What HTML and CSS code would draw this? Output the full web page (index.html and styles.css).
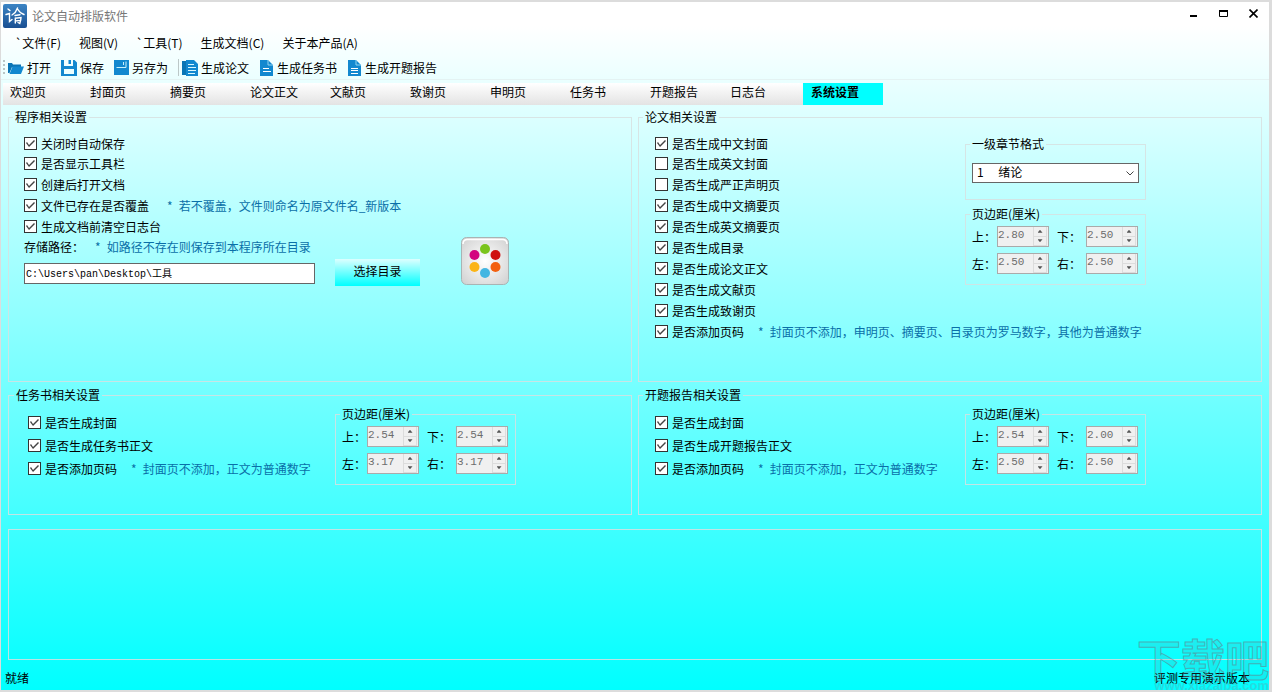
FILE: index.html
```html
<!DOCTYPE html>
<html lang="zh-CN">
<head>
<meta charset="utf-8">
<meta name="viewport" content="width=device-width, initial-scale=1">
<title>论文自动排版软件</title>
<link rel="stylesheet" href="styles.css">
</head>
<body>
<div class="window">
  <header class="titlebar">
    <svg class="app-icon" viewBox="0 0 24 24" aria-hidden="true">
      <defs><linearGradient id="appbg" x1="0" y1="0" x2="0" y2="1"><stop offset="0" stop-color="#3b84c4"/><stop offset="1" stop-color="#1a4f92"/></linearGradient></defs>
      <rect width="24" height="24" rx="2" fill="url(#appbg)"/>
      <path d="M5 5l2 1.600M3 10.500l3.500-1v8l2.500-2M14.500 4c-1 3-3 5.500-5.500 7M14.500 5c1.500 2.500 3.500 4.500 6.500 5.500M12 11.500l5-.8M12.300 14v5M12.300 14.300l5.700-.8c0 2-.5 4-1.200 6l-1.800-1M12.300 17l5-.6" stroke="#fff" stroke-width="1.400" fill="none" stroke-linecap="round"/>
    </svg>
    <h1 class="title">论文自动排版软件</h1>
    <div class="controls">
      <button class="control" aria-label="最小化"><svg width="9" height="9" viewBox="0 0 9 9"><path d="M1 7h7" stroke="#000" stroke-width="2"/></svg></button>
      <button class="control" aria-label="最大化"><svg width="9" height="9" viewBox="0 0 9 9"><path d="M0.500 1.500v6h8v-6" stroke="#000" fill="none"/><path d="M0 2h9" stroke="#000" stroke-width="2"/></svg></button>
      <button class="control" aria-label="关闭"><svg width="9" height="9" viewBox="0 0 9 9"><path d="M0.500 0.500L8.500 8.500M8.500 0.500L0.500 8.500" stroke="#000" stroke-width="1.600" fill="none"/></svg></button>
    </div>
  </header>

  <nav class="menu">
    <button>`文件(F)</button>
    <button>视图(V)</button>
    <button>`工具(T)</button>
    <button>生成文档(C)</button>
    <button>关于本产品(A)</button>
  </nav>

  <div class="toolbar">
    <span class="grip"></span>
    <button><svg width="16" height="16" viewBox="0 0 16 16"><path d="M0 3h4l1 1.500h8V7H4L1.500 13H0z" fill="#0a75b5"/><path d="M4.500 6.500H16L13 14H1.500z" fill="#1288cf"/></svg>打开</button>
    <button><svg width="16" height="16" viewBox="0 0 16 16"><path d="M0 0h3v6h9V0h1.500L16 2.500V16H0z" fill="#1288cf"/><path d="M7.500 0h2.500v4H7.500z" fill="#1288cf"/><path d="M3 9h10v5H3z" fill="#edffff"/></svg>保存</button>
    <button><svg width="15" height="15" viewBox="0 0 15 15"><path d="M0 0h15v15H0z" fill="#1288cf"/><path d="M2.500 7.500h9.500V1.500M9.500 2v3" stroke="#c8f0fa" fill="none"/></svg>另存为</button>
    <span class="separator"></span>
    <button><svg width="16" height="16" viewBox="0 0 16 16"><path d="M0 1h5v14H0z" fill="#0a75b5"/><path d="M4 0h8l4 4v12H4z" fill="#1288cf"/><path d="M6 4.500h6M6 7.500h8M6 10.500h8M6 13.500h7" stroke="#d9f8ff"/></svg>生成论文</button>
    <button class="doc"><svg width="13" height="16" viewBox="0 0 13 16"><path d="M0 0h8l5 5v11H0z" fill="#1288cf"/><path d="M8 0v5h5" stroke="#8fd4f0" fill="none"/><path d="M3 8.500h6M3 11.500h8" stroke="#fff"/></svg>生成任务书</button>
    <button class="doc"><svg width="13" height="16" viewBox="0 0 13 16"><path d="M0 0h8l5 5v11H0z" fill="#1288cf"/><path d="M8 0v5h5" stroke="#8fd4f0" fill="none"/><path d="M3 8.500h7M3 10.500h7M3 13.500h7" stroke="#fff"/></svg>生成开题报告</button>
  </div>

  <nav class="tabs" role="tablist">
    <button role="tab">欢迎页</button>
    <button role="tab">封面页</button>
    <button role="tab">摘要页</button>
    <button role="tab">论文正文</button>
    <button role="tab">文献页</button>
    <button role="tab">致谢页</button>
    <button role="tab">申明页</button>
    <button role="tab">任务书</button>
    <button role="tab">开题报告</button>
    <button role="tab">日志台</button>
    <button role="tab" class="active" aria-selected="true">系统设置</button>
  </nav>

  <main class="settings">
    <fieldset class="group program">
      <legend>程序相关设置</legend>
      <ul class="checks">
        <li><label><input type="checkbox" checked>关闭时自动保存</label></li>
        <li><label><input type="checkbox" checked>是否显示工具栏</label></li>
        <li><label><input type="checkbox" checked>创建后打开文档</label></li>
        <li><label><input type="checkbox" checked>文件已存在是否覆盖</label><span class="hint far"><span>*</span>若不覆盖，文件则命名为原文件名_新版本</span></li>
        <li><label><input type="checkbox" checked>生成文档前清空日志台</label></li>
      </ul>
      <div class="storage">
        <div class="path">
          <div class="path-head"><label for="path">存储路径：</label><span class="hint"><span>*</span>如路径不存在则保存到本程序所在目录</span></div>
          <input id="path" type="text" value="C:\Users\pan\Desktop\工具">
        </div>
        <button class="choose">选择目录</button>
        <button class="palette" aria-label="主题颜色">
          <svg width="48" height="48" viewBox="0 0 48 48">
            <defs>
              <radialGradient id="tile" cx=".5" cy=".5" r=".7"><stop offset="0" stop-color="#fff"/><stop offset=".7" stop-color="#dedede"/><stop offset="1" stop-color="#cfcfcf"/></radialGradient>
            </defs>
            <rect x=".5" y=".5" width="47" height="47" rx="5" fill="url(#tile)" stroke="#a9b4b4"/>
            <path d="M2 7q0-4.500 4.500-4.500h35q4.500 0 4.500 4.500" stroke="#fff" stroke-width="1.500" fill="none"/>
            <circle cx="24" cy="12" r="5" fill="#7ac41c"/>
            <circle cx="13.500" cy="18" r="5" fill="#d3057f"/>
            <circle cx="34.500" cy="18" r="5" fill="#cf1010"/>
            <circle cx="13.500" cy="30" r="5" fill="#fbb416"/>
            <circle cx="34.500" cy="30" r="5" fill="#f3600f"/>
            <circle cx="24" cy="36" r="5" fill="#44b6e2"/>
          </svg>
        </button>
      </div>
    </fieldset>

    <fieldset class="group thesis">
      <legend>论文相关设置</legend>
      <div class="split">
        <ul class="checks">
          <li><label><input type="checkbox" checked>是否生成中文封面</label></li>
          <li><label><input type="checkbox">是否生成英文封面</label></li>
          <li><label><input type="checkbox">是否生成严正声明页</label></li>
          <li><label><input type="checkbox" checked>是否生成中文摘要页</label></li>
          <li><label><input type="checkbox" checked>是否生成英文摘要页</label></li>
          <li><label><input type="checkbox" checked>是否生成目录</label></li>
          <li><label><input type="checkbox" checked>是否生成论文正文</label></li>
          <li><label><input type="checkbox" checked>是否生成文献页</label></li>
          <li><label><input type="checkbox" checked>是否生成致谢页</label></li>
          <li><label><input type="checkbox" checked>是否添加页码</label><span class="hint"><span>*</span>封面页不添加，申明页、摘要页、目录页为罗马数字，其他为普通数字</span></li>
        </ul>
        <div class="side">
          <fieldset class="box chapter">
            <legend>一级章节格式</legend>
            <div class="select">
              <select aria-label="一级章节格式"><option>1&emsp;&nbsp;绪论</option></select>
              <svg width="8" height="5" viewBox="0 0 8 5"><path d="M0.500 0.500L4 4L7.500 0.500" stroke="#444" fill="none"/></svg>
            </div>
          </fieldset>
          <fieldset class="box">
            <legend>页边距(厘米)</legend>
            <div class="margins">
              <label for="a1">上：</label><span class="spin"><input id="a1" type="number" value="2.80" disabled><span class="arrows"><button disabled aria-label="增加"></button><button disabled aria-label="减少"></button></span></span>
              <label for="a2">下：</label><span class="spin"><input id="a2" type="number" value="2.50" disabled><span class="arrows"><button disabled aria-label="增加"></button><button disabled aria-label="减少"></button></span></span>
              <label for="a3">左：</label><span class="spin"><input id="a3" type="number" value="2.50" disabled><span class="arrows"><button disabled aria-label="增加"></button><button disabled aria-label="减少"></button></span></span>
              <label for="a4">右：</label><span class="spin"><input id="a4" type="number" value="2.50" disabled><span class="arrows"><button disabled aria-label="增加"></button><button disabled aria-label="减少"></button></span></span>
            </div>
          </fieldset>
        </div>
      </div>
    </fieldset>

    <fieldset class="group short task">
      <legend>任务书相关设置</legend>
      <div class="split">
        <ul class="checks">
          <li><label><input type="checkbox" checked>是否生成封面</label></li>
          <li><label><input type="checkbox" checked>是否生成任务书正文</label></li>
          <li><label><input type="checkbox" checked>是否添加页码</label><span class="hint"><span>*</span>封面页不添加，正文为普通数字</span></li>
        </ul>
        <div class="side">
          <fieldset class="box">
            <legend>页边距(厘米)</legend>
            <div class="margins">
              <label for="b1">上：</label><span class="spin"><input id="b1" type="number" value="2.54" disabled><span class="arrows"><button disabled aria-label="增加"></button><button disabled aria-label="减少"></button></span></span>
              <label for="b2">下：</label><span class="spin"><input id="b2" type="number" value="2.54" disabled><span class="arrows"><button disabled aria-label="增加"></button><button disabled aria-label="减少"></button></span></span>
              <label for="b3">左：</label><span class="spin"><input id="b3" type="number" value="3.17" disabled><span class="arrows"><button disabled aria-label="增加"></button><button disabled aria-label="减少"></button></span></span>
              <label for="b4">右：</label><span class="spin"><input id="b4" type="number" value="3.17" disabled><span class="arrows"><button disabled aria-label="增加"></button><button disabled aria-label="减少"></button></span></span>
            </div>
          </fieldset>
        </div>
      </div>
    </fieldset>

    <fieldset class="group short">
      <legend>开题报告相关设置</legend>
      <div class="split">
        <ul class="checks">
          <li><label><input type="checkbox" checked>是否生成封面</label></li>
          <li><label><input type="checkbox" checked>是否生成开题报告正文</label></li>
          <li><label><input type="checkbox" checked>是否添加页码</label><span class="hint"><span>*</span>封面页不添加，正文为普通数字</span></li>
        </ul>
        <div class="side">
          <fieldset class="box">
            <legend>页边距(厘米)</legend>
            <div class="margins">
              <label for="c1">上：</label><span class="spin"><input id="c1" type="number" value="2.54" disabled><span class="arrows"><button disabled aria-label="增加"></button><button disabled aria-label="减少"></button></span></span>
              <label for="c2">下：</label><span class="spin"><input id="c2" type="number" value="2.00" disabled><span class="arrows"><button disabled aria-label="增加"></button><button disabled aria-label="减少"></button></span></span>
              <label for="c3">左：</label><span class="spin"><input id="c3" type="number" value="2.50" disabled><span class="arrows"><button disabled aria-label="增加"></button><button disabled aria-label="减少"></button></span></span>
              <label for="c4">右：</label><span class="spin"><input id="c4" type="number" value="2.50" disabled><span class="arrows"><button disabled aria-label="增加"></button><button disabled aria-label="减少"></button></span></span>
            </div>
          </fieldset>
        </div>
      </div>
    </fieldset>
    <section class="blank"></section>
  </main>

  <footer class="status">
    <span>就绪</span>
    <span>评测专用演示版本</span>
  </footer>
  <div class="watermark" aria-hidden="true">
    <span class="mark">下载吧</span>
    <span class="site">www.xiazaiba.com</span>
  </div>
</div>
</body>
</html>
```

FILE: styles.css
```css
* { box-sizing: border-box; }
body {
  margin: 0;
  background: #e0e0e0;
  color: #000;
  font: 12px/14px "Noto Sans CJK SC", sans-serif;
}
button, input, select { font: inherit; color: inherit; margin: 0; padding: 0; }
button { border: 0; background: none; white-space: nowrap; }
ul { list-style: none; margin: 0; padding: 0; }

.window {
  position: relative;
  display: flex;
  flex-direction: column;
  min-height: 100vh;
  border: solid #dcdcdc;
  border-width: 2px 3px 2px 1px;
  background: linear-gradient(#fff 24px, #0ff 100%);
}

.titlebar { display: flex; align-items: center; height: 28px; padding: 0 11px 0 2px; }
.app-icon { width: 24px; height: 24px; }
.title { margin: 0 0 0 5px; font-size: 12px; font-weight: 400; color: #777; }
.controls { display: flex; gap: 21px; margin-left: auto; padding-bottom: 6px; }
.control { display: flex; }

.menu { display: flex; gap: 18px; padding: 0 14px; height: 26px; }

.toolbar {
  display: flex;
  align-items: center;
  gap: 10px;
  height: 24px;
  padding-left: 2px;
  border-bottom: 1px solid #e4f3f3;
}
.toolbar button { display: flex; align-items: center; gap: 3px; }
.toolbar .doc { gap: 4px; margin-left: 1px; }
.grip { width: 2px; height: 16px; margin-right: -7px; background: repeating-linear-gradient(#b9c6c6 0 2px, transparent 2px 4px); }
.separator { width: 1px; height: 17px; background: #bcc8c8; }
.separator + button { margin-left: -7px; }

.tabs { display: flex; margin: 3px 0 0 2px; height: 22px; }
.tabs button {
  flex: 0 0 80px;
  padding: 0 0 5px 7px;
  text-align: left;
  background: linear-gradient(#fff, #e3e3e3);
}
.tabs .active { padding-left: 8px; background: #0ff; font-weight: 700; }

.settings {
  flex: 1;
  display: grid;
  grid-template-columns: 1fr 1fr;
  grid-template-rows: auto auto 1fr;
  column-gap: 6px;
  padding: 5px 7px 0;
}
fieldset { margin: 0; min-width: 0; border: 1px solid rgba(215, 225, 225, .85); }
legend { padding: 0 2px; height: 15px; line-height: 13px; white-space: nowrap; }
.group { padding: 0 115px 39px 15px; margin-bottom: 6px; }
.group > legend { margin-left: -11px; }
.group.thesis { padding-left: 16px; }
.group.thesis > legend { margin-left: -12px; }
.group.short { padding: 0 115px 29px 16px; margin-bottom: 14px; }
.group.short > legend { margin-left: -12px; }
.group.task { padding-left: 19px; }
.group.task > legend { margin-left: -14px; }

.checks { padding-top: 9px; }
.checks li { display: flex; align-items: center; height: 21px; white-space: nowrap; }
.checks li:first-child { height: 19px; }
.checks label { display: flex; align-items: center; gap: 4px; }
.short .checks { padding-top: 8px; }
.short .checks li { height: 23px; }

input[type="checkbox"] {
  appearance: none;
  width: 13px;
  height: 13px;
  border: 1px solid #333;
  background: #fff;
}
input[type="checkbox"]:checked::before {
  content: "";
  display: block;
  height: 11px;
  background: #444;
  clip-path: polygon(1px 5px, 2px 4px, 4px 7px, 9px 2px, 10px 3px, 4px 9px);
}

.hint { display: flex; gap: 6px; margin-left: 14px; color: #0a6fa8; white-space: nowrap; }
.hint.far { margin-left: 18px; }

.storage { display: flex; align-items: flex-end; }
.path { flex: 0 1 291px; padding-bottom: 2px; }
.path-head { display: flex; align-items: center; height: 20px; margin-bottom: 6px; }
.path-head .hint { margin-left: 11px; }
.path input {
  display: block;
  width: 100%;
  height: 21px;
  padding: 0 1px 3px;
  border: 1px solid #666;
  background: #fff;
  font: 10px/14px "Liberation Mono", "Noto Sans CJK SC", monospace;
}
.choose {
  flex: 0 0 85px;
  height: 27px;
  margin-left: 20px;
  padding-bottom: 4px;
  background: linear-gradient(#dff, #0ff);
}
.palette { display: flex; margin: 0 0 1px 41px; }

.split { display: flex; align-items: flex-start; }
.split > .checks { flex: 1; min-width: 0; }
.side { flex: 0 0 181px; padding-top: 12px; }
.short .side { padding-top: 4px; }
.box { padding: 0 6px 10px; }
.box > legend { margin-left: -2px; }
.chapter { margin-bottom: 7px; padding-bottom: 16px; }

.select { position: relative; margin-top: 11px; }
.select select {
  display: block;
  appearance: none;
  width: 100%;
  height: 20px;
  padding: 0 20px 2px 4px;
  border: 1px solid #666;
  border-radius: 0;
  background: #fff;
}
.select svg { position: absolute; right: 5px; top: 8px; pointer-events: none; }

.margins {
  display: grid;
  grid-template-columns: 25px 52px 37px 52px;
  row-gap: 6px;
  padding-top: 4px;
  align-items: center;
}
.margins label:nth-of-type(even) { padding-left: 8px; white-space: nowrap; }
.spin {
  display: flex;
  height: 21px;
  border: 1px solid #aaa;
  background: #f0f0f0;
}
.spin input {
  appearance: textfield;
  flex: 1;
  min-width: 0;
  height: 16px;
  border: 0;
  background: none;
  color: #6d6d6d;
  font: 11px/16px "Liberation Mono", monospace;
}
.spin input::-webkit-inner-spin-button { appearance: none; margin: 0; }
.arrows { display: flex; flex-direction: column; width: 14px; margin-right: 1px; }
.arrows button {
  flex: 1;
  display: flex;
  align-items: center;
  justify-content: center;
  border: solid #dcdcdc;
  border-width: 0 1px 1px;
}
.arrows button::before {
  content: "";
  width: 5px;
  height: 3px;
  background: #555;
  clip-path: polygon(50% 0, 100% 100%, 0 100%);
}
.arrows button:last-child::before { clip-path: polygon(0 0, 100% 0, 50% 100%); }

.blank { grid-column: 1 / -1; border: 1px solid rgba(215, 225, 225, .85); }

.status {
  display: flex;
  justify-content: space-between;
  align-items: center;
  height: 30px;
  padding: 6px 19px 0 4px;
}

.watermark {
  position: absolute;
  right: 0;
  bottom: -2px;
  display: flex;
  flex-direction: column;
  align-items: flex-end;
  opacity: .6;
  pointer-events: none;
}
.mark {
  font-size: 44px;
  line-height: 44px;
  font-weight: 700;
  color: rgba(90, 150, 160, .25);
  -webkit-text-stroke: 1px #64808a;
}
.site {
  font: 700 13px/12px "Liberation Sans", sans-serif;
  color: #3fc4cc;
}
```
